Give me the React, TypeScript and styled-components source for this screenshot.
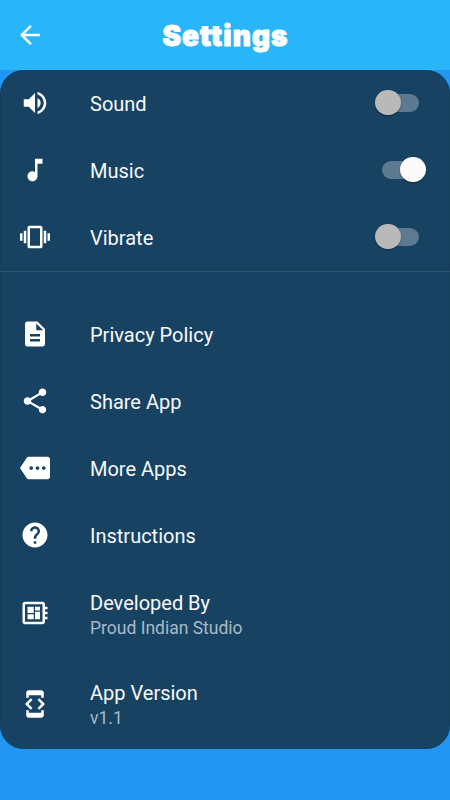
import React from 'react';
import styled, { createGlobalStyle } from 'styled-components';
import type { IconType } from 'react-icons';
import {
  MdArrowBack,
  MdVolumeUp,
  MdMusicNote,
  MdVibration,
  MdShare,
  MdMore,
  MdHelp,
  MdDeveloperBoard,
  MdDeveloperMode,
} from 'react-icons/md';

const GlobalStyle = createGlobalStyle`
  *, *::before, *::after { box-sizing: border-box; }
  body { margin: 0; background: #2196f3; font-family: Roboto, sans-serif; }
`;

const Screen = styled.div`
  width: 450px;
  height: 800px;
  background: #2196f3;
  overflow: hidden;
`;

const Header = styled.header`
  height: 70px;
  background: #29b6f8;
  display: grid;
  grid-template-columns: 60px 1fr 60px;
  align-items: center;
  color: #fff;
`;

const BackButton = styled.button`
  border: 0;
  padding: 0 0 0 15px;
  background: none;
  color: inherit;
  display: flex;
`;

const Title = styled.h1`
  margin: 0;
  padding-top: 1px;
  text-align: center;
  font: 900 28px/34px Inter, sans-serif;
  letter-spacing: 1.05px;
  text-indent: 1px;
  -webkit-text-stroke: 0.9px #fff;
`;

const Panel = styled.main`
  height: 679px;
  border-radius: 24px;
  background: #174262;
  box-shadow: inset 0 0 1px rgba(0, 0, 0, 0.5);
`;

const Toggles = styled.section`
  height: 202px;
  border-bottom: 1px solid #2e5674;
`;

const Links = styled.section`
  padding-top: 29px;
`;

const Row = styled.div<{ $tall?: boolean }>`
  height: ${(p) => (p.$tall ? 90.5 : 67)}px;
  padding: 0 24px 2px 20px;
  display: flex;
  align-items: center;
  color: #fff;
`;

const IconSlot = styled.span`
  width: 70px;
  display: flex;
`;

const Copy = styled.div<{ $tall?: boolean }>`
  flex: 1;
  padding-top: ${(p) => (p.$tall ? 4 : 2)}px;
`;

const Label = styled.div`
  font-size: 20px;
  line-height: 24px;
  color: #f7f9fb;
`;

const Detail = styled.div`
  font-size: 17.5px;
  line-height: 24px;
  padding-top: 1px;
  color: #a9bac7;
`;

const Switch = styled.button<{ $on: boolean }>`
  width: 51px;
  height: 26px;
  padding: 0;
  border: 0;
  background: none;
  display: flex;
  align-items: center;

  &::before {
    content: '';
    width: 37px;
    height: 18px;
    margin-left: 7px;
    border-radius: 9px;
    background: #5d7a91;
  }

  &::after {
    content: '';
    flex: none;
    width: 25.5px;
    height: 25.5px;
    margin-left: ${(p) => (p.$on ? -19 : -44)}px;
    border-radius: 50%;
    background: ${(p) => (p.$on ? '#fafafa' : '#b9b9b9')};
    box-shadow: 0 1px 2px rgba(0, 0, 0, 0.35);
  }
`;

const DocumentIcon = ({ size = 30 }: { size?: number | string }) => (
  <svg width={size} height={size} viewBox="0 0 24 24" fill="currentColor">
    <path d="M14 2H6c-1.100 0-1.990.9-1.990 2L4 20c0 1.100.890 2 1.990 2H18c1.100 0 2-.9 2-2V8l-6-6zm2 16H8v-2h8v2zm0-4H8v-2h8v2zm-3-5V3.500L18.500 9H13z" />
  </svg>
);

type Item = { label: string; icon: IconType | typeof DocumentIcon; detail?: string };

const toggles = [
  { label: 'Sound', icon: MdVolumeUp, on: false },
  { label: 'Music', icon: MdMusicNote, on: true },
  { label: 'Vibrate', icon: MdVibration, on: false },
];

const items: Item[] = [
  { label: 'Privacy Policy', icon: DocumentIcon },
  { label: 'Share App', icon: MdShare },
  { label: 'More Apps', icon: MdMore },
  { label: 'Instructions', icon: MdHelp },
  { label: 'Developed By', icon: MdDeveloperBoard, detail: 'Proud Indian Studio' },
  { label: 'App Version', icon: MdDeveloperMode, detail: 'v1.1' },
];

export default function App() {
  return (
    <Screen>
      <GlobalStyle />
      <Header>
        <BackButton aria-label="Back">
          <MdArrowBack size={30} />
        </BackButton>
        <Title>Settings</Title>
      </Header>
      <Panel>
        <Toggles>
          {toggles.map(({ label, icon: Icon, on }) => (
            <Row key={label}>
              <IconSlot><Icon size={30} /></IconSlot>
              <Copy><Label>{label}</Label></Copy>
              <Switch $on={on} role="switch" aria-checked={on} aria-label={label} />
            </Row>
          ))}
        </Toggles>
        <Links>
          {items.map(({ label, icon: Icon, detail }) => (
            <Row key={label} $tall={!!detail}>
              <IconSlot><Icon size={30} /></IconSlot>
              <Copy $tall={!!detail}>
                <Label>{label}</Label>
                {detail && <Detail>{detail}</Detail>}
              </Copy>
            </Row>
          ))}
        </Links>
      </Panel>
    </Screen>
  );
}
